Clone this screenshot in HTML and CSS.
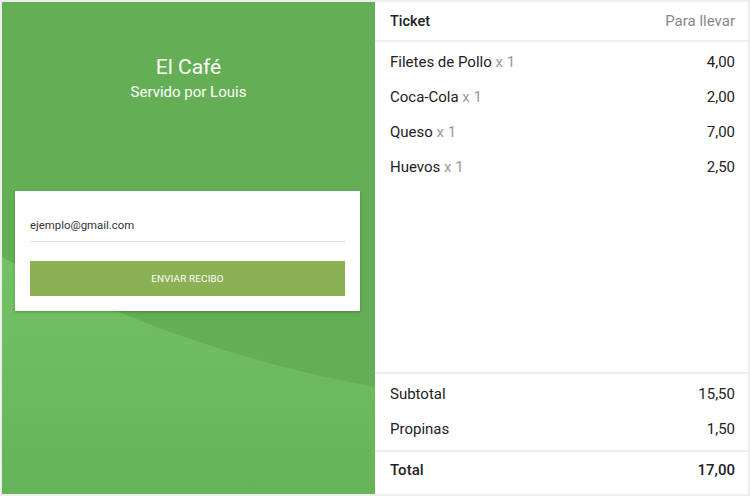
FILE: index.html
```html
<!DOCTYPE html>
<html>
<head>
<meta charset="utf-8">
<link rel="stylesheet" href="styles.css">
</head>
<body>
<div class="frame">
  <section class="brand">
    <svg class="wave" width="373" height="492" viewBox="0 0 373 492" preserveAspectRatio="none">
      <defs>
        <linearGradient id="g" x1="0" y1="0" x2="0" y2="1">
          <stop offset="0" stop-color="#74c266"/>
          <stop offset="1" stop-color="#67b458"/>
        </linearGradient>
      </defs>
      <path d="M0,255 Q178,350 373,385 L373,492 L0,492 Z" fill="url(#g)"/>
    </svg>
    <div class="brand-head">
      <h1 class="title">El Café</h1>
      <p class="subtitle">Servido por Louis</p>
    </div>
    <div class="card">
      <div class="field">ejemplo@gmail.com</div>
      <button class="send">ENVIAR RECIBO</button>
    </div>
  </section>
  <section class="ticket">
    <header class="ticket-head">
      <span class="head-title">Ticket</span>
      <span class="head-mode">Para llevar</span>
    </header>
    <div class="items">
      <div class="row"><span>Filetes de Pollo <span class="qty">x 1</span></span><span>4,00</span></div>
      <div class="row"><span>Coca-Cola <span class="qty">x 1</span></span><span>2,00</span></div>
      <div class="row"><span>Queso <span class="qty">x 1</span></span><span>7,00</span></div>
      <div class="row"><span>Huevos <span class="qty">x 1</span></span><span>2,50</span></div>
    </div>
    <div class="sums">
      <div class="row"><span>Subtotal</span><span>15,50</span></div>
      <div class="row"><span>Propinas</span><span>1,50</span></div>
    </div>
    <div class="total">
      <div class="row strong"><span>Total</span><span>17,00</span></div>
    </div>
  </section>
</div>
</body>
</html>
```

FILE: styles.css
```css
* { box-sizing: border-box; }
html, body { margin: 0; padding: 0; }
body {
  width: 750px;
  height: 496px;
  background: #eeeeee;
  font-family: Roboto, "Noto Sans", sans-serif;
  overflow: hidden;
}
.frame {
  display: flex;
  padding: 2px;
  height: 496px;
}
.brand {
  position: relative;
  width: 373px;
  height: 492px;
  background: #64af55;
  display: flex;
  flex-direction: column;
  align-items: center;
  overflow: hidden;
}
.wave {
  position: absolute;
  left: 0;
  top: 0;
}
.brand-head {
  position: relative;
  text-align: center;
  color: #ffffff;
  padding-top: 53px;
}
.title {
  margin: 0;
  font-size: 21px;
  font-weight: 400;
  line-height: 24px;
}
.subtitle {
  margin: 4px 0 0;
  font-size: 15px;
  line-height: 18px;
}
.card {
  position: relative;
  margin-top: 90px;
  width: 345px;
  margin-left: -2px;
  background: #ffffff;
  box-shadow: 0 1px 3px rgba(0,0,0,0.25);
  padding: 18px 15px 15px;
}
.field {
  font-size: 11.4px;
  color: #333333;
  line-height: 32px;
  border-bottom: 1px solid #dddddd;
  height: 33px;
}
.send {
  display: block;
  width: 100%;
  margin-top: 19px;
  height: 35px;
  border: none;
  background: #8bb155;
  color: #ffffff;
  font-family: Roboto, "Noto Sans", sans-serif;
  font-size: 9.8px;
  letter-spacing: 0.2px;
}
.ticket {
  width: 373px;
  height: 492px;
  background: #ffffff;
  display: flex;
  flex-direction: column;
  color: #222222;
  font-size: 15px;
}
.ticket-head {
  height: 40px;
  padding: 0 13px 0 15px;
  display: flex;
  justify-content: space-between;
  align-items: center;
  border-bottom: 2px solid #eeeeee;
}
.head-title { font-weight: 500; font-size: 14.5px; }
.head-mode { color: #888888; }
.items {
  flex: 1;
  padding-top: 2px;
}
.row {
  height: 35px;
  padding: 0 13px 0 15px;
  display: flex;
  justify-content: space-between;
  align-items: center;
}
.qty { color: #999999; }
.sums {
  border-top: 2px solid #eeeeee;
  padding: 2px 0 4px;
}
.total {
  border-top: 2px solid #eeeeee;
  padding-bottom: 7px;
}
.strong { font-weight: 500; }
```
